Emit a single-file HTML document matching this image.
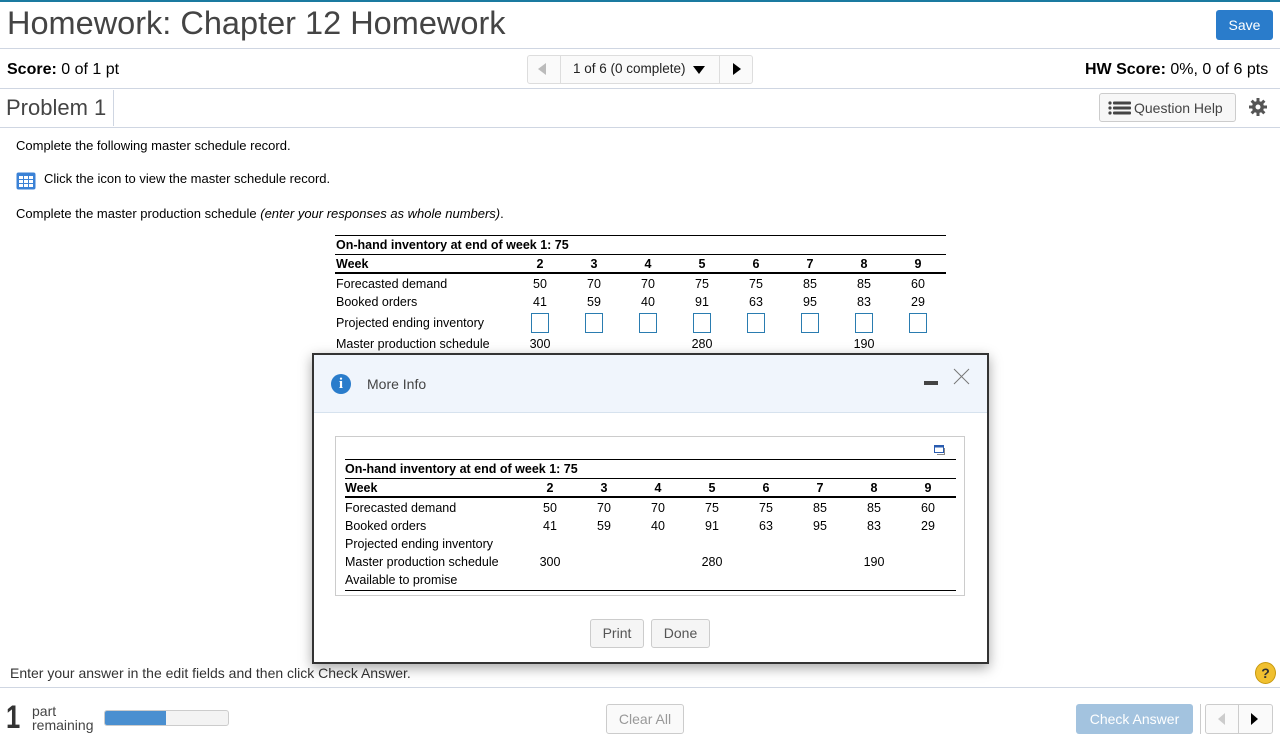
<!DOCTYPE html>
<html><head><meta charset="utf-8"><style>
*{margin:0;padding:0;box-sizing:border-box}
body{width:1280px;height:747px;position:relative;overflow:hidden;background:#fff;font-family:"Liberation Sans",Arial,sans-serif;color:#000}
.a{position:absolute;white-space:nowrap}
.hl{position:absolute;height:1px;background:#cfd6e2}
.t{font-size:12.5px;line-height:14px}
.p{font-size:13px;line-height:15px}
.c{position:absolute;width:40px;text-align:center;font-size:12.5px;line-height:14px;white-space:nowrap}
.b{font-weight:bold}
.ln{position:absolute;height:1px;background:#000}
.box{position:absolute;width:18px;height:20px;border:1.5px solid #2a7cb0;background:#fff}
.btn{position:absolute;border:1px solid #ccc;border-radius:3px;background:#f5f5f5;color:#555;font-size:14px;text-align:center}
</style></head><body>
<div class="a" style="left:0;top:0;width:1280px;height:2px;background:#1a7aa0"></div>
<div class="a" style="left:7px;top:4px;font-size:32.5px;line-height:38px;color:#444">Homework: Chapter 12 Homework</div>
<div class="a" style="left:1216px;top:10px;width:57px;height:30px;background:#2a7ccb;border-radius:3px;color:#fff;font-size:14px;line-height:30px;text-align:center">Save</div>
<div class="hl" style="left:0;top:48px;width:1280px"></div>
<div class="a" style="left:7px;top:60px;font-size:16px;line-height:19px"><b>Score:</b> 0 of 1 pt</div>
<div class="a" style="left:527px;top:55px;width:226px;height:29px;border:1px solid #ddd;border-radius:3px;background:#fafafa"></div>
<div class="a" style="left:560px;top:55px;width:1px;height:29px;background:#ddd"></div>
<div class="a" style="left:719px;top:55px;width:1px;height:29px;background:#ddd"></div>
<div class="a" style="left:538px;top:63px;width:0;height:0;border-top:6px solid transparent;border-bottom:6px solid transparent;border-right:8px solid #bbb"></div>
<div class="a" style="left:573px;top:61px;font-size:13.5px;line-height:16px;color:#222">1 of 6 (0 complete)</div>
<div class="a" style="left:693px;top:66px;width:0;height:0;border-left:6px solid transparent;border-right:6px solid transparent;border-top:8px solid #000"></div>
<div class="a" style="left:733px;top:63px;width:0;height:0;border-top:6px solid transparent;border-bottom:6px solid transparent;border-left:8px solid #000"></div>
<div class="a" style="left:1085px;top:60px;font-size:16px;line-height:19px"><b>HW Score:</b> 0%, 0 of 6 pts</div>
<div class="hl" style="left:0;top:88px;width:1280px"></div>
<div class="a" style="left:6px;top:95px;font-size:22px;line-height:26px;color:#444">Problem 1</div>
<div class="a" style="left:113px;top:90px;width:1px;height:36px;background:#cfd6e2"></div>
<div class="a" style="left:1099px;top:93px;width:137px;height:29px;border:1px solid #ccc;border-radius:3px;background:#f7f7f7"></div>
<svg class="a" style="left:1108px;top:101px" width="24" height="14"><g fill="#444"><circle cx="2" cy="2" r="1.6"/><circle cx="2" cy="7" r="1.6"/><circle cx="2" cy="12" r="1.6"/><rect x="5" y="0.5" width="18" height="3" rx="1"/><rect x="5" y="5.5" width="18" height="3" rx="1"/><rect x="5" y="10.5" width="18" height="3" rx="1"/></g></svg>
<div class="a" style="left:1134px;top:100px;font-size:14px;line-height:16px;color:#444">Question Help</div>
<svg class="a" style="left:1249px;top:98px" width="18" height="18" viewBox="0 0 18 18"><g fill="#555"><circle cx="9" cy="9" r="6"/><rect x="7.5" y="0" width="3" height="18"/><rect x="0" y="7.5" width="18" height="3"/><rect x="7.5" y="0" width="3" height="18" transform="rotate(45 9 9)"/><rect x="7.5" y="0" width="3" height="18" transform="rotate(-45 9 9)"/></g><circle cx="9" cy="9" r="2.5" fill="#fff"/></svg>
<div class="hl" style="left:0;top:127px;width:1280px"></div>

<div class="a p" style="left:16px;top:138px">Complete the following master schedule record.</div>
<svg class="a" style="left:16px;top:172px" width="20" height="18"><rect x="0.5" y="0.5" width="19" height="17" rx="2" fill="#3b82d6"/><g fill="#fff"><rect x="3" y="4" width="4" height="3"/><rect x="8" y="4" width="4" height="3"/><rect x="13" y="4" width="4" height="3"/><rect x="3" y="8" width="4" height="3"/><rect x="8" y="8" width="4" height="3"/><rect x="13" y="8" width="4" height="3"/><rect x="3" y="12" width="4" height="3"/><rect x="8" y="12" width="4" height="3"/><rect x="13" y="12" width="4" height="3"/></g></svg>
<div class="a p" style="left:44px;top:171px">Click the icon to view the master schedule record.</div>
<div class="a p" style="left:16px;top:206px">Complete the master production schedule <i>(enter your responses as whole numbers)</i>.</div>

<div class="ln" style="left:335px;top:235px;width:611px"></div>
<div class="a t b" style="left:336px;top:238px">On-hand inventory at end of week 1: 75</div>
<div class="ln" style="left:335px;top:254px;width:611px"></div>
<div class="a t b" style="left:336px;top:257px">Week</div>
<div class="c b" style="left:520px;top:257px">2</div><div class="c b" style="left:574px;top:257px">3</div><div class="c b" style="left:628px;top:257px">4</div><div class="c b" style="left:682px;top:257px">5</div><div class="c b" style="left:736px;top:257px">6</div><div class="c b" style="left:790px;top:257px">7</div><div class="c b" style="left:844px;top:257px">8</div><div class="c b" style="left:898px;top:257px">9</div>
<div class="ln" style="left:335px;top:272px;width:611px;height:2px"></div>
<div class="a t" style="left:336px;top:277px">Forecasted demand</div>
<div class="c" style="left:520px;top:277px">50</div><div class="c" style="left:574px;top:277px">70</div><div class="c" style="left:628px;top:277px">70</div><div class="c" style="left:682px;top:277px">75</div><div class="c" style="left:736px;top:277px">75</div><div class="c" style="left:790px;top:277px">85</div><div class="c" style="left:844px;top:277px">85</div><div class="c" style="left:898px;top:277px">60</div>
<div class="a t" style="left:336px;top:295px">Booked orders</div>
<div class="c" style="left:520px;top:295px">41</div><div class="c" style="left:574px;top:295px">59</div><div class="c" style="left:628px;top:295px">40</div><div class="c" style="left:682px;top:295px">91</div><div class="c" style="left:736px;top:295px">63</div><div class="c" style="left:790px;top:295px">95</div><div class="c" style="left:844px;top:295px">83</div><div class="c" style="left:898px;top:295px">29</div>
<div class="a t" style="left:336px;top:316px">Projected ending inventory</div>
<div class="box" style="left:531px;top:313px"></div><div class="box" style="left:585px;top:313px"></div><div class="box" style="left:639px;top:313px"></div><div class="box" style="left:693px;top:313px"></div><div class="box" style="left:747px;top:313px"></div><div class="box" style="left:801px;top:313px"></div><div class="box" style="left:855px;top:313px"></div><div class="box" style="left:909px;top:313px"></div>
<div class="a t" style="left:336px;top:337px">Master production schedule</div>
<div class="c" style="left:520px;top:337px">300</div><div class="c" style="left:682px;top:337px">280</div><div class="c" style="left:844px;top:337px">190</div>

<div class="a" style="left:10px;top:665px;font-size:14px;line-height:16px;color:#333">Enter your answer in the edit fields and then click Check Answer.</div>
<div class="a" style="left:1255px;top:662px;width:21px;height:22px;border-radius:50%;background:#f0c030;border:1px solid #c89a10;text-align:center;font-size:14px;line-height:20px;font-weight:bold;color:#333">?</div>
<div class="hl" style="left:0;top:687px;width:1280px"></div>
<div class="a" style="left:6px;top:700px;font-size:32px;line-height:34px;color:#333;font-weight:bold;transform:scaleX(.8);transform-origin:left">1</div>
<div class="a" style="left:32px;top:704px;font-size:14px;line-height:14px;color:#444">part<br>remaining</div>
<div class="a" style="left:104px;top:710px;width:125px;height:16px;border:1px solid #ccc;border-radius:3px;background:#f3f3f3;overflow:hidden"><div style="width:61px;height:16px;background:#4a8fd0"></div></div>
<div class="btn" style="left:606px;top:704px;width:78px;height:30px;line-height:28px;color:#999;background:#fafafa">Clear All</div>
<div class="a" style="left:1076px;top:704px;width:117px;height:30px;background:#a3c3df;border-radius:3px;color:#fff;font-size:14px;line-height:30px;text-align:center">Check Answer</div>
<div class="a" style="left:1200px;top:704px;width:1px;height:30px;background:#ccc"></div>
<div class="a" style="left:1205px;top:704px;width:68px;height:30px;border:1px solid #ccc;border-radius:3px;background:#fafafa"></div>
<div class="a" style="left:1238px;top:704px;width:1px;height:30px;background:#ccc"></div>
<div class="a" style="left:1218px;top:713px;border-top:6px solid transparent;border-bottom:6px solid transparent;border-right:7px solid #ccc"></div>
<div class="a" style="left:1251px;top:713px;border-top:6px solid transparent;border-bottom:6px solid transparent;border-left:7px solid #000"></div>

<div class="a" style="left:312px;top:353px;width:677px;height:311px;border:2px solid #333;background:#fff;box-shadow:0 4px 12px rgba(0,0,0,.35)"></div>
<div class="a" style="left:314px;top:355px;width:673px;height:58px;background:#f0f5fc;border-bottom:1px solid #d6e2ee"></div>
<div class="a" style="left:331px;top:374px;width:20px;height:20px;border-radius:50%;background:#2a7ccb;color:#fff;font-family:'Liberation Serif',serif;font-weight:bold;font-size:15px;line-height:20px;text-align:center">i</div>
<div class="a" style="left:367px;top:376px;font-size:14px;line-height:16px;color:#444">More Info</div>
<div class="a" style="left:924px;top:381px;width:14px;height:4px;background:#444"></div>
<svg class="a" style="left:953px;top:368px" width="17" height="17"><path d="M1 1L16 16M16 1L1 16" stroke="#777" stroke-width="1"/></svg>
<div class="a" style="left:335px;top:436px;width:630px;height:160px;border:1px solid #ccc"></div>
<svg class="a" style="left:934px;top:445px" width="12" height="10"><rect x="0.5" y="0.5" width="9" height="7" fill="#fff" stroke="#2a5cb0"/><rect x="0.5" y="0.5" width="9" height="2" fill="#2a5cb0"/><path d="M10.5 3v6.5H3" stroke="#888" fill="none"/></svg>
<div class="ln" style="left:345px;top:459px;width:611px"></div>
<div class="a t b" style="left:345px;top:462px">On-hand inventory at end of week 1: 75</div>
<div class="ln" style="left:345px;top:478px;width:611px"></div>
<div class="a t b" style="left:345px;top:481px">Week</div>
<div class="c b" style="left:530px;top:481px">2</div><div class="c b" style="left:584px;top:481px">3</div><div class="c b" style="left:638px;top:481px">4</div><div class="c b" style="left:692px;top:481px">5</div><div class="c b" style="left:746px;top:481px">6</div><div class="c b" style="left:800px;top:481px">7</div><div class="c b" style="left:854px;top:481px">8</div><div class="c b" style="left:908px;top:481px">9</div>
<div class="ln" style="left:345px;top:496px;width:611px;height:2px"></div>
<div class="a t" style="left:345px;top:501px">Forecasted demand</div>
<div class="c" style="left:530px;top:501px">50</div><div class="c" style="left:584px;top:501px">70</div><div class="c" style="left:638px;top:501px">70</div><div class="c" style="left:692px;top:501px">75</div><div class="c" style="left:746px;top:501px">75</div><div class="c" style="left:800px;top:501px">85</div><div class="c" style="left:854px;top:501px">85</div><div class="c" style="left:908px;top:501px">60</div>
<div class="a t" style="left:345px;top:519px">Booked orders</div>
<div class="c" style="left:530px;top:519px">41</div><div class="c" style="left:584px;top:519px">59</div><div class="c" style="left:638px;top:519px">40</div><div class="c" style="left:692px;top:519px">91</div><div class="c" style="left:746px;top:519px">63</div><div class="c" style="left:800px;top:519px">95</div><div class="c" style="left:854px;top:519px">83</div><div class="c" style="left:908px;top:519px">29</div>
<div class="a t" style="left:345px;top:537px">Projected ending inventory</div>
<div class="a t" style="left:345px;top:555px">Master production schedule</div>
<div class="c" style="left:530px;top:555px">300</div><div class="c" style="left:692px;top:555px">280</div><div class="c" style="left:854px;top:555px">190</div>
<div class="a t" style="left:345px;top:573px">Available to promise</div>
<div class="ln" style="left:345px;top:590px;width:611px"></div>
<div class="btn" style="left:590px;top:619px;width:54px;height:29px;line-height:27px">Print</div>
<div class="btn" style="left:651px;top:619px;width:59px;height:29px;line-height:27px">Done</div>
</body></html>
